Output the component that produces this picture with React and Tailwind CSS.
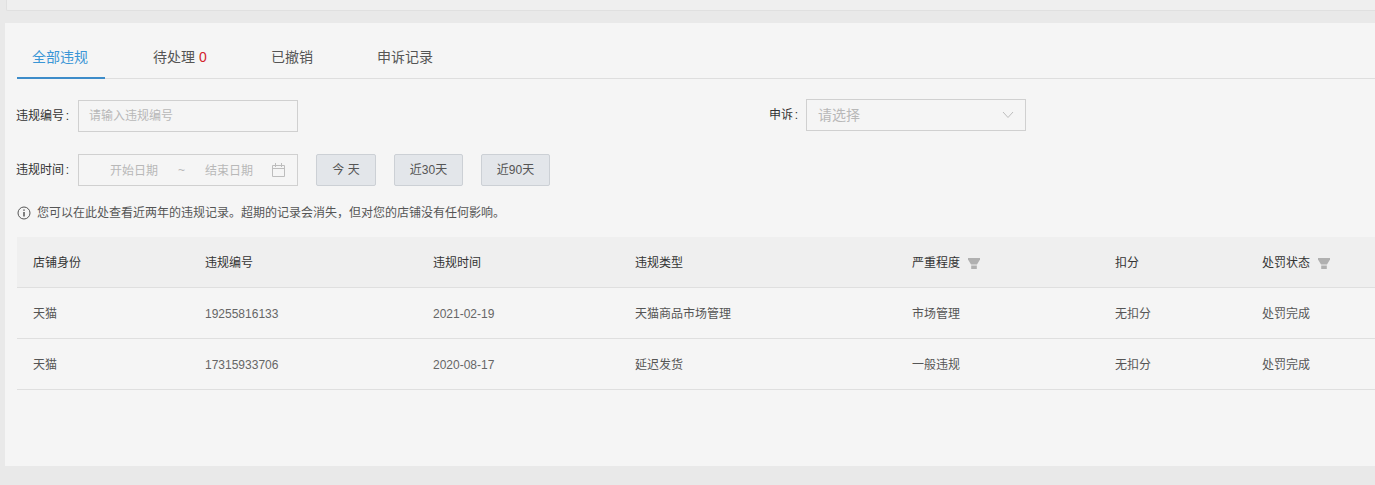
function Funnel() {
  return (
    <svg width="12" height="11" viewBox="0 0 12 11" className="shrink-0">
      <path d="M0 0h12v1.5L9 6.5H3L0 1.5z" fill="#b0b0b0" />
      <path d="M3.2 7.5h5.6V11H3.2z" fill="#b0b0b0" />
    </svg>
  );
}

function Label({ children }) {
  return (
    <div className="w-[61px] pr-[8px] flex justify-between -ml-px text-[#333]">
      <span>{children}</span>
      <span>:</span>
    </div>
  );
}

const cols = "grid grid-cols-[173px_228px_203px_276px_203px_147px_1fr]";

const rows = [
  ["天猫", "19255816133", "2021-02-19", "天猫商品市场管理", "市场管理", "无扣分", "处罚完成"],
  ["天猫", "17315933706", "2020-08-17", "延迟发货", "一般违规", "无扣分", "处罚完成"],
];

function cellClass(i) {
  if (i === 0) return "pl-[16px]";
  if (i === 3) return "pl-[14px]";
  if (i === 1 || i === 2) return "pl-[15px] text-[#666]";
  return "pl-[15px]";
}

export default function App() {
  return (
    <div className="h-[485px] w-[1375px] overflow-hidden bg-[#e9e9e9] font-['Liberation_Sans','Noto_Sans_CJK_SC',sans-serif] text-xs text-[#555]">
      <div className="ml-[6px] h-[11px] rounded-bl-[2px] border-b border-l border-[#e0e0e0] bg-[#efefef]" />
      <div className="ml-[5px] mt-3 h-[443px] bg-[#f5f5f5] pl-3">
        <div className="flex h-[56px] items-stretch border-b border-[#dedede] pt-[19px] text-sm text-[#555]">
          <div className="flex h-[37px] w-[88px] justify-center border-b-2 border-[#3d8cc9] pr-[2px] pt-[5px] text-[#3a96d6]">全部违规</div>
          <div className="ml-[48px] w-[118px] pt-[5px]">待处理 <span className="text-[#d3232b]">0</span></div>
          <div className="w-[106px] pt-[5px]">已撤销</div>
          <div className="pt-[5px]">申诉记录</div>
        </div>

        <div className="mt-[21px] flex h-8 items-center">
          <Label>违规编号</Label>
          <div className="ml-px flex h-8 w-[220px] items-center border border-[#d0d0d0] pl-[10px] text-[#b8b8b8]">请输入违规编号</div>
          <div className="ml-[471px] flex w-[37px] -translate-y-px justify-between pr-[8px] text-[#333]"><span>申诉</span><span>:</span></div>
          <div className="flex h-8 w-[220px] -translate-y-px items-center justify-between border border-[#d0d0d0] pl-[11px] pr-[11px] text-sm text-[#b8b8b8]">
            <span>请选择</span>
            <svg width="12" height="8" viewBox="0 0 12 8" fill="none" stroke="#bdbdbd" strokeWidth="1">
              <path d="M1 1l5 5.5L11 1" />
            </svg>
          </div>
        </div>

        <div className="mt-[22px] flex h-8 items-center">
          <Label>违规时间</Label>
          <div className="ml-px flex h-8 w-[220px] items-center border border-[#d0d0d0] pl-[31px] pr-[12px] text-[#b8b8b8]">
            <span className="translate-y-px">开始日期</span>
            <span className="ml-5">~</span>
            <span className="ml-5 translate-y-px">结束日期</span>
            <svg className="ml-auto" width="13" height="14" viewBox="0 0 13 14" fill="none" stroke="#bdbdbd" strokeWidth="1">
              <path d="M.5 2.5h12v11H.5zM.5 5.5h12M3.5 0v4M9.5 0v4" />
            </svg>
          </div>
          <div className="ml-[18px] flex h-8 w-[60px] items-center justify-center rounded-[2px] border border-[#ccd0d5] bg-[#e3e6ea] text-[#555]">今 天</div>
          <div className="ml-[18px] flex h-8 w-[69px] items-center justify-center rounded-[2px] border border-[#ccd0d5] bg-[#e3e6ea] text-[#555]">近30天</div>
          <div className="ml-[18px] flex h-8 w-[69px] items-center justify-center rounded-[2px] border border-[#ccd0d5] bg-[#e3e6ea] text-[#555]">近90天</div>
        </div>

        <div className="mt-[19px] flex h-4 items-center gap-[6px] text-[#555]">
          <svg width="14" height="14" viewBox="0 0 14 14" fill="none" stroke="#555" strokeWidth="1">
            <circle cx="7" cy="7" r="6" />
            <path d="M7 6v4.5M7 3.5v1.3" strokeWidth="1.5" />
          </svg>
          <span>您可以在此处查看近两年的违规记录。超期的记录会消失，但对您的店铺没有任何影响。</span>
        </div>

        <div className="mt-4">
          <div className={`${cols} h-[51px] items-center border-b border-[#dfdfdf] bg-[#efefef] pt-[2px] text-[#333]`}>
            <div className="pl-[16px]">店铺身份</div>
            <div className="pl-[15px]">违规编号</div>
            <div className="pl-[15px]">违规时间</div>
            <div className="pl-[14px]">违规类型</div>
            <div className="flex items-center gap-[8px] pl-[15px]">严重程度<Funnel /></div>
            <div className="pl-[15px]">扣分</div>
            <div className="flex items-center gap-[8px] pl-[15px]">处罚状态<Funnel /></div>
          </div>
          {rows.map((r) => (
            <div key={r[1]} className={`${cols} h-[51px] items-center border-b border-[#dfdfdf] pt-[2px] text-[#555]`}>
              {r.map((c, i) => (
                <div key={i} className={cellClass(i)}>{c}</div>
              ))}
            </div>
          ))}
        </div>
      </div>
    </div>
  );
}
